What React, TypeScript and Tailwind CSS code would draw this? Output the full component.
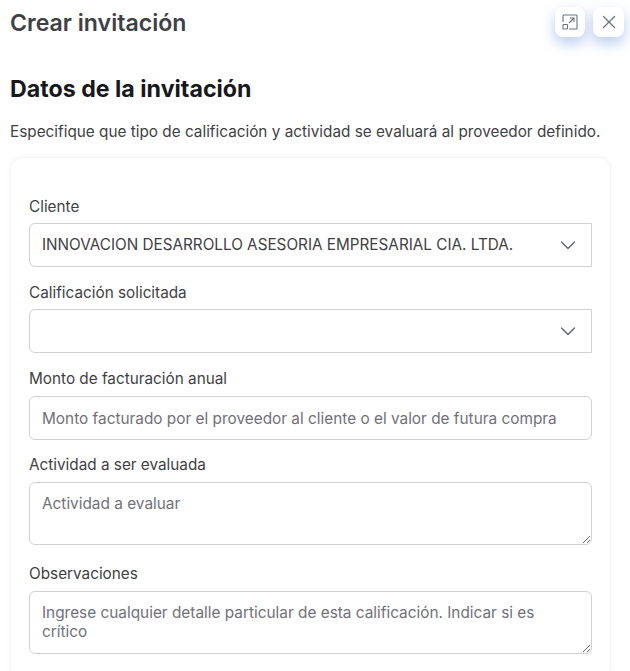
import { X } from 'lucide-react'

function Label({ children, tight }: { children: string; tight?: boolean }) {
  return <label className={`block text-[15.3px] leading-[23px] text-[#3f3f46] ${tight ? 'mb-[5px]' : 'mb-[6px]'}`}>{children}</label>
}

function Chevron() {
  return (
    <svg viewBox="0 0 16 16" className="w-4 h-4 text-[#5f6368]" fill="none" stroke="currentColor" strokeWidth="1.4" strokeLinecap="round" strokeLinejoin="round">
      <path d="M1.5 5l6.5 6.5L14.5 5" />
    </svg>
  )
}

function SelectBox({ value }: { value?: string }) {
  return (
    <div className="flex items-center justify-between h-[44px] pl-3 pr-[15px] bg-white border border-[#d1d1d1] rounded-l-md text-[15.28px] text-[#3f3f46]">
      <span>{value}</span>
      <Chevron />
    </div>
  )
}

function ExpandIcon() {
  return (
    <svg viewBox="0 0 16 16" className="w-4 h-4 text-[#6b7280]" fill="none" stroke="currentColor" strokeWidth="1.1">
      <path d="M1 8V2a1 1 0 0 1 1-1h12a1 1 0 0 1 1 1v12a1 1 0 0 1-1 1H7" />
      <rect x="1" y="10.5" width="4.5" height="4.5" rx="0.6" />
      <path d="M7 9l5-5M8 4h4v4" />
    </svg>
  )
}

export default function App() {
  return (
    <div className="h-[671px] overflow-hidden bg-white font-['Inter',sans-serif]">
      <div className="pl-[10px] pr-[6px] pt-[7px]">
        {/* Header */}
        <div className="flex items-start justify-between h-[49px]">
          <h2 className="text-[23.1px] leading-[32px] font-semibold text-[#3f3f46]">Crear invitación</h2>
          <div className="flex gap-[8px]">
            <button className="flex items-center justify-center w-[30px] h-[30px] rounded-lg bg-white shadow-[0_6px_14px_rgba(96,140,220,0.45)]">
              <ExpandIcon />
            </button>
            <button className="flex items-center justify-center w-[31px] h-[30px] rounded-lg bg-white shadow-[0_6px_14px_rgba(96,140,220,0.45)]">
              <X className="w-[22px] h-[22px] text-[#6b7280]" strokeWidth={1.4} />
            </button>
          </div>
        </div>

        <h3 className="text-[23.2px] leading-[32px] font-bold text-[#18181b] mt-[17px]">Datos de la invitación</h3>
        <p className="text-[15.32px] leading-[23px] text-[#3f3f46] mt-[15px]">
          Especifique que tipo de calificación y actividad se evaluará al proveedor definido.
        </p>

        {/* Form card */}
        <div className="mt-[14px] w-[601px] rounded-xl bg-white border border-[#f5f5f5] shadow-[0_0_6px_rgba(0,0,0,0.04)] px-[18px] pt-[37px] pb-6">
          <Label tight>Cliente</Label>
          <SelectBox value="INNOVACION DESARROLLO ASESORIA EMPRESARIAL CIA. LTDA." />

          <div className="mt-[14px]">
            <Label tight>Calificación solicitada</Label>
            <SelectBox />
          </div>

          <div className="mt-[14px]">
            <Label>Monto de facturación anual</Label>
            <input
              readOnly
              placeholder="Monto facturado por el proveedor al cliente o el valor de futura compra"
              className="block w-full h-[44px] px-3 border border-[#d1d1d1] rounded-md text-[15.36px] placeholder:text-[#71717a] outline-none"
            />
          </div>

          <div className="mt-[13px]">
            <Label>Actividad a ser evaluada</Label>
            <textarea
              readOnly
              placeholder="Actividad a evaluar"
              className="block w-full h-[63px] px-3 pt-[11px] pb-2 border border-[#d1d1d1] rounded-md text-[15.36px] leading-[19px] placeholder:text-[#71717a] outline-none"
            />
          </div>

          <div className="mt-[17px]">
            <Label>Observaciones</Label>
            <textarea
              readOnly
              placeholder="Ingrese cualquier detalle particular de esta calificación. Indicar si es crítico"
              className="block w-full h-[63px] px-3 pt-[11px] pb-2 border border-[#d1d1d1] rounded-md text-[15.36px] leading-[19px] placeholder:text-[#71717a] outline-none"
            />
          </div>
        </div>
      </div>
    </div>
  )
}
